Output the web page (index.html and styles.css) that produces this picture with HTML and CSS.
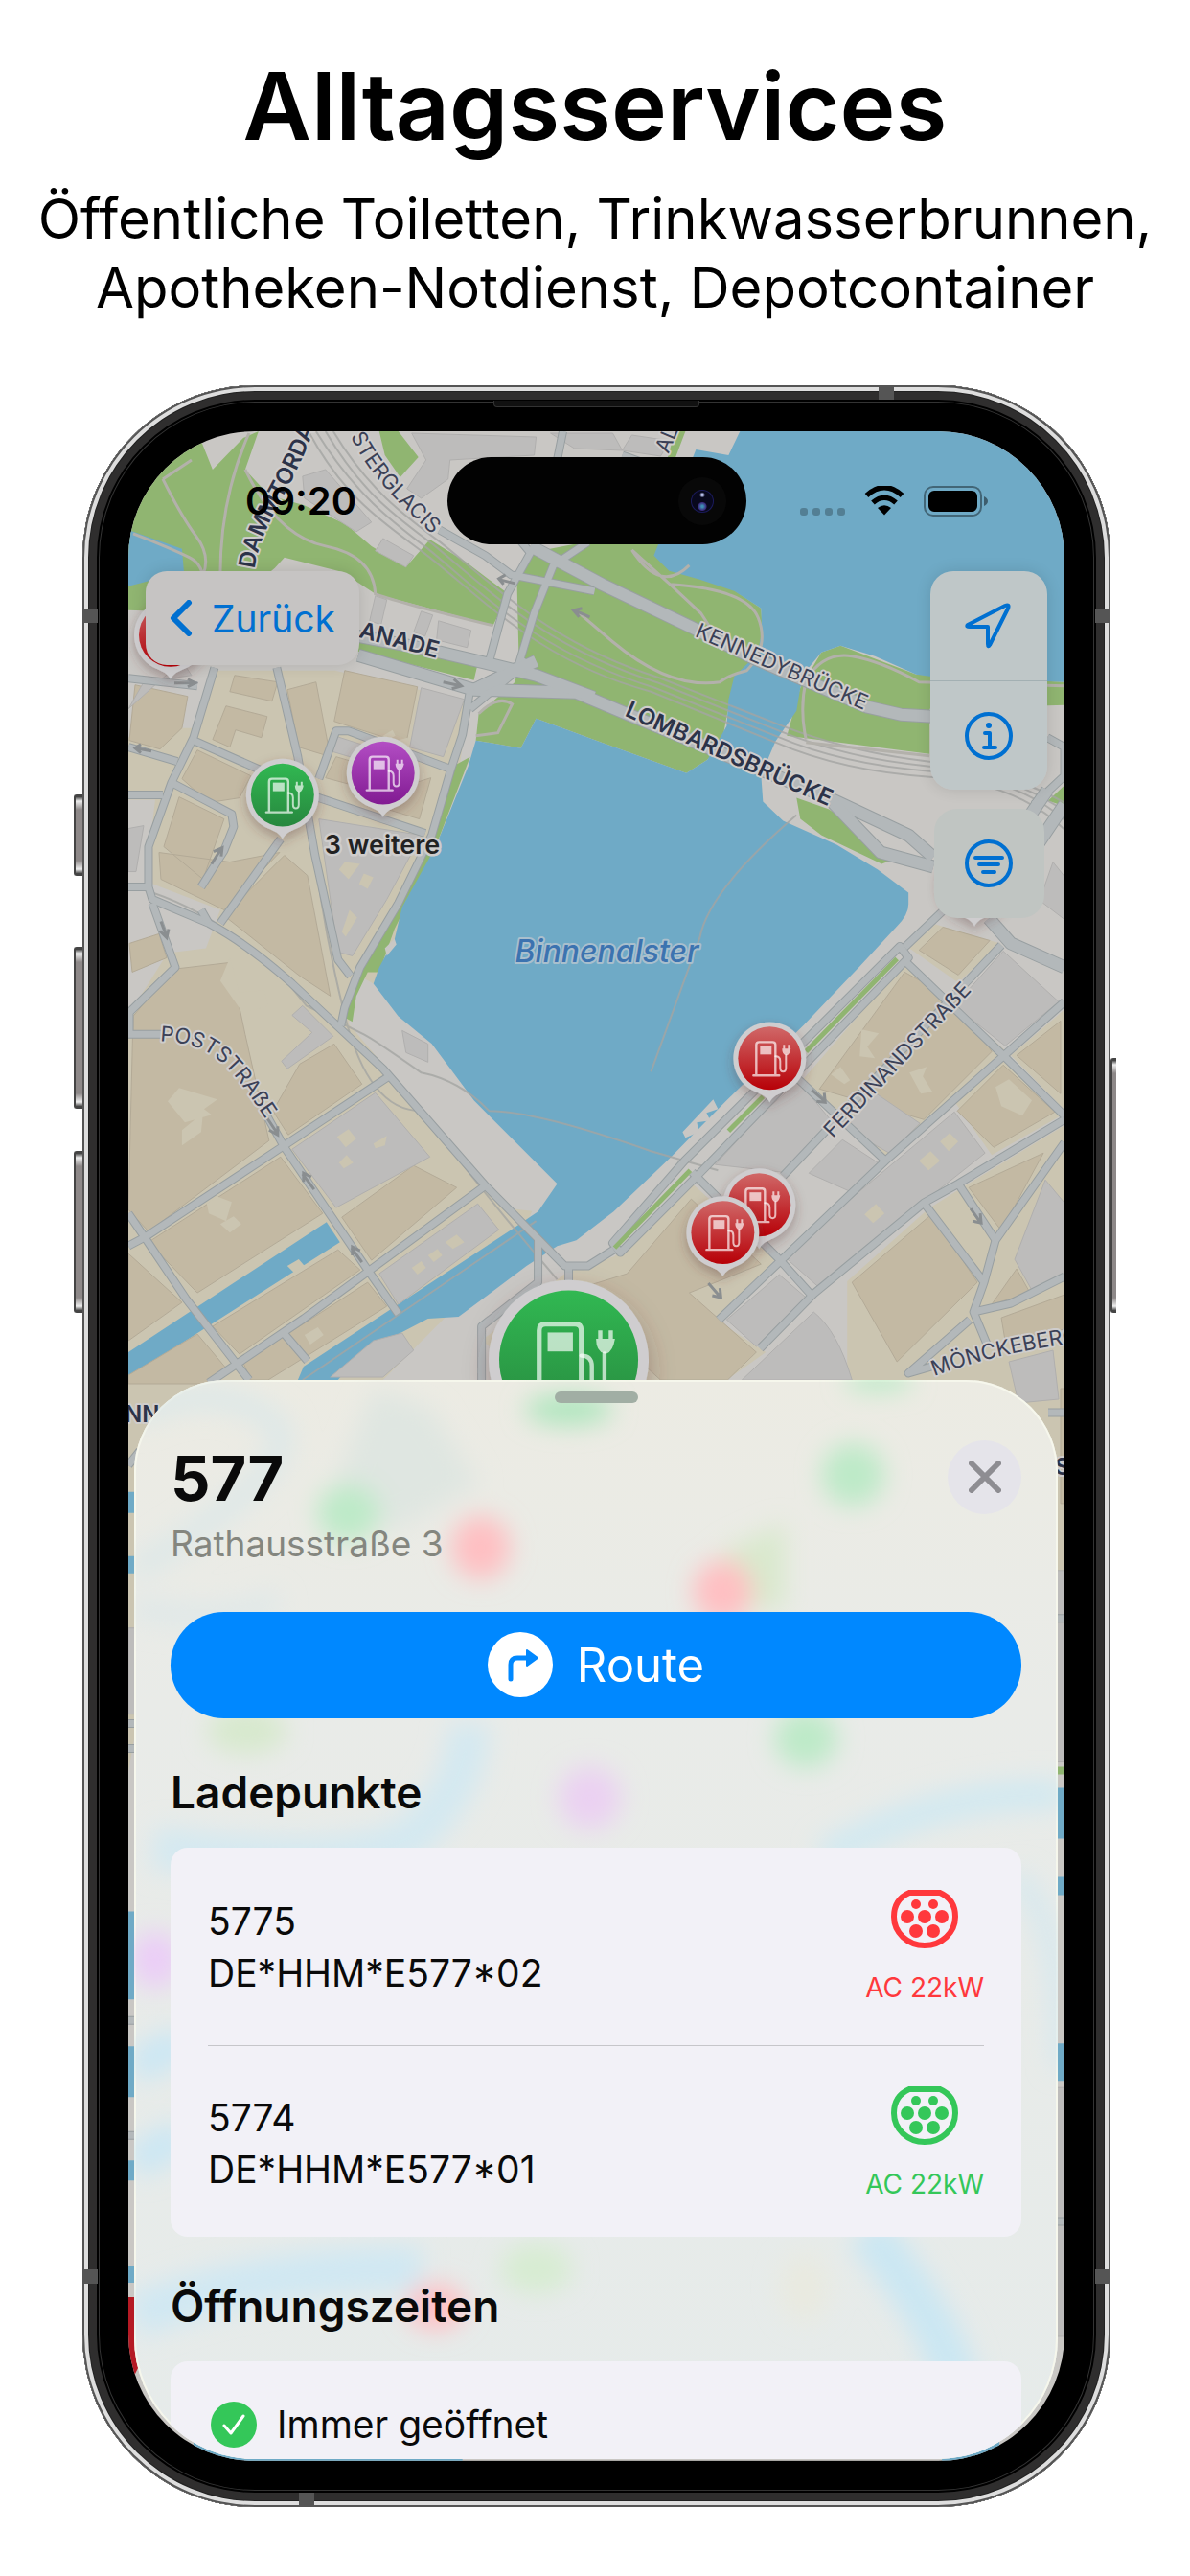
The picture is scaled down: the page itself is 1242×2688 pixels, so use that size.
FILE: index.html
```html
<!DOCTYPE html>
<html lang="de">

<head>
    <meta charset="UTF-8">
    <meta name="viewport" content="width=device-width, initial-scale=1.0">
    <title>Alltagsservices</title>
    <link rel="stylesheet" href="styles.css">
</head>

<body>
    <header class="intro">
        <h1>Alltagsservices</h1>
        <p>Öffentliche Toiletten, Trinkwasserbrunnen, Apotheken-Notdienst, Depotcontainer</p>
    </header>

    <main class="phone">
        <span class="side-key side-key-action"></span>
        <span class="side-key side-key-up"></span>
        <span class="side-key side-key-down"></span>
        <span class="side-key side-key-power"></span>
        <span class="band band-top"></span>
        <span class="band band-bottom"></span>
        <span class="band band-left"></span>
        <span class="band band-right"></span>
        <span class="band band-left band-low"></span>
        <span class="band band-right band-low"></span>
        <span class="speaker"></span>

        <div class="screen">
            <!-- map -->
            <svg class="map" viewBox="134 450 978 2120" preserveAspectRatio="xMidYMin slice" role="img" aria-label="Karte">
                <defs>
                    <linearGradient id="red" x1="0" y1="0" x2="0" y2="1">
                        <stop offset="0" stop-color="#d06868" />
                        <stop offset="1" stop-color="#b70007" />
                    </linearGradient>
                    <linearGradient id="green" x1="0" y1="0" x2="0" y2="1">
                        <stop offset="0" stop-color="#31b852" />
                        <stop offset="1" stop-color="#27873e" />
                    </linearGradient>
                    <linearGradient id="purple" x1="0" y1="0" x2="0" y2="1">
                        <stop offset="0" stop-color="#b34ec4" />
                        <stop offset="1" stop-color="#811a92" />
                    </linearGradient>
                    <filter id="pin-shadow" x="-100%" y="-100%" width="300%" height="300%">
                        <feDropShadow dx="0" dy="5" stdDeviation="6" flood-color="#5a3030" flood-opacity=".35" />
                    </filter>
                    <g id="pin">
                        <path d="M0 46C-3 40-8 38-15 35A38 38 0 1 1 15 35C8 38 3 40 0 46Z" fill="#cfcdcf" filter="url(#pin-shadow)" />
                    </g>
                    <g id="pump" fill="none" stroke="#fff" stroke-opacity=".68" stroke-width="2.4" stroke-linecap="round" stroke-linejoin="round">
                        <path d="M-14 18V-14q0-3 3-3H3q3 0 3 3V18M-17 18H10" />
                        <path d="M-10-13H2V-4H-10Z" fill="#fff" fill-opacity=".68" stroke="none" />
                        <path d="M6-2q5 0 5 5v7q0 4 3 4t3-4V-3" stroke-width="2" />
                        <path d="M13-10H22Q21-4 18-3H17Q13-4 13-10ZM14-14h2v4h-2ZM19-14h2v4h-2Z" fill="#fff" fill-opacity=".68" stroke="none" />
                    </g>
                    <g id="streets">
                        <path d="M224 697L202 770L179 817L155 884V926L159 939L218 964Q258 985 305 1027L400 1116L507 1238L590 1322H614L641 1305" />
                        <path d="M289 697L311 790L329 893L353 1002L366 1019M134 780L185 795M202 773L270 803L333 833L444 870M333 813L351 763H364L471 803M179 817L242 850L244 863L234 888L210 926M293 876L230 964M218 964L210 950M134 926H155M134 830H170M134 708L206 716" />
                        <path d="M159 943L183 1010L135 1057V1080H170M277 1162L297 1198L384 1326L416 1372M134 1301L151 1292L297 1196L406 1124M134 1267L151 1292L194 1356L260 1441M218 1444L317 1377L507 1238M297 1393L321 1421M503 1441V1385L562 1339V1292M594 1322V1345" />
                        <path d="M945 989L985 951M945 1003L1048 1102L1112 1165M1046 987L818 1228M1112 1046L925 1212L751 1378M834 1127L925 1212M723 1224L814 1315L850 1355M1112 1169L1001 1236L965 1256L850 1351L794 1408M965 1256L1028 1339L1017 1370L1032 1406M1001 1236L1040 1295L1112 1193M1040 1295L1028 1339M1017 1370L1056 1361L1112 1333M1013 1378L949 1434L980 1425" />
                        <path d="M640 1298L715 1212L940 988L949 1000L730 1226L648 1308ZM491 720L483 767L471 803L451 872L416 943L376 1010L360 1052L356 1071M491 740L540 700M459 553L507 580L534 600L621 617M511 690L530 620L554 577L540 560M542 693L558 640L578 590L614 566M500 715L550 690M1080 840L1112 810L1112 780L1094 770M588 450L580 490M650 475L720 500" />
                        <path d="M1095 1475H1112M1100 1690h12M1100 2320h12M134 1530L146 1515M134 1800h12M134 1826h12M134 2110h12M134 2230h12" />
                    </g>
                    <g id="avenues">
                        <path d="M374 684L495 720L602 723L652 744L870 835L949 872L975 895" />
                        <path d="M374 664L443 677L507 692L560 705L620 728" />
                        <path d="M554 570L629 610L723 655L787 687L906 738L941 746L975 748" />
                        <path d="M1033 959L1056 985L1112 1010M870 838L920 890L975 905M495 720L560 690M1094 825L1070 860M1085 880L1112 840" />
                    </g>
                    <path id="p-damm" d="M266 594C272 545 305 515 331 440" />
                    <path id="p-glacis" d="M366 455C382 490 410 520 454 560" />
                    <path id="p-esp" d="M374 665L456 687" />
                    <path id="p-kennedy" d="M725 664L915 747" />
                    <path id="p-lomb" d="M652 747Q730 782 884 850" />
                    <path id="p-post" d="M167 1087C225 1090 237 1108 288 1184" />
                    <path id="p-ferd" d="M870 1189L1024 1025" />
                    <path id="p-moenk" d="M976 1437Q1040 1412 1140 1400" />
                    <path id="p-al" d="M698 474L712 440" />
                </defs>

                <rect class="ground" x="134" y="450" width="978" height="2120" />

                <!-- built-up areas -->
                <g class="block">
                    <path d="M134 770L225 700L350 700L490 732L480 800L440 960L378 1055L420 1110L560 1255L540 1300L400 1441L200 1480L134 1850Z" />
                    <path d="M642 1312L719 1232L810 1315L751 1380L800 1412L759 1441L560 1441L503 1400L590 1330Z" />
                    <path d="M945 1005L1056 1102L929 1210L838 1128ZM977 965L1045 985L1001 1026L950 990ZM1056 1102L1112 1054L1112 1159ZM997 1150L1048 1108L1108 1165L1036 1206Z" />
                    <path d="M885 1338L970 1262L1005 1240L1112 1175V1700H1000L885 1441Z" />
                </g>
                <path class="ground" d="M134 640L224 700L205 760L134 760ZM134 835h28L152 920L230 950L215 990L175 995L134 1060ZM376 1019L390 1027L582 1236L560 1265L534 1262L404 1116L364 1069Z" />

                <!-- parks -->
                <g class="park">
                    <path d="M134 450H206L222 490L254 457L270 450L256 490L281 517L317 527L361 547L388 570L424 592L449 563L487 587L531 620L515 653L448 635L392 620L357 597L297 582L287 593L230 640L134 637Z" />
                    <path d="M374 667L499 693L495 710L374 680Z" />
                    <path d="M540 610L554 577L614 565H690L795 635L797 667L761 738L755 770L739 793L717 807L620 772L560 750L544 781L497 773L500 745L538 712L542 690Z" />
                    <path d="M836 718L858 681L878 674L957 704L1112 712V736L971 740V787L822 768Z" />
                    <path d="M832 833L866 845L937 896L921 902L858 872L836 855ZM396 450H416L437 477L418 498L402 475ZM705 450H716L705 479H697ZM1112 820L1095 836L1112 842ZM1100 1845h12v8h-12z" />
                    <path d="M473 800L491 790L455 884L412 970L396 1015H384L372 1040L368 1067L361 1063L366 1031L396 981L440 901Z" />
                </g>

                <!-- water -->
                <g class="water">
                    <path d="M773 450L761 475L727 469L683 580L699 596L731 605L767 617L795 635L796 659L791 683L767 706L761 730L759 758L739 793L717 807L620 772L560 750L544 781L497 773L489 800L455 884L420 947L412 981L396 1010L390 1027L416 1061L451 1090L495 1149L582 1236L562 1265L534 1284L416 1362L317 1427L309 1446L353 1441L376 1414L447 1377L479 1375L550 1322L582 1301L602 1295L641 1265L701 1208L759 1149L840 1070L898 1009L937 967Q949 955 949 944V932L917 908L874 882L818 857L797 837L795 809L810 774L832 742L836 718L844 698L858 681L878 674L914 685L957 704L971 706L1112 712V450Z" />
                    <path d="M134 553L190 573L192 597L134 612ZM134 1412L341 1276L355 1297L134 1438Z" />
                    <path d="M134 1558h8v22h-8zM134 1625h8v18h-8zM134 1996h8v92h-8zM134 2137h8v53h-8zM134 2256h8v21h-8zM134 2367h8v17h-8zM1100 1867h12v53h-12zM1100 1960h12v19h-12zM1100 2134h12v39h-12zM202 2550h281v20H202zM984 2540h60v30H984z" />
                </g>
                <path class="ground" d="M713 1182L745 1148L750 1158L738 1162L742 1170L728 1172L730 1182L716 1188ZM402 990l10-10 2 6-10 12z" />

                <!-- buildings -->
                <g class="building">
                    <path d="M141 715L196 727L190 760L167 782L135 773Z" />
                    <path d="M236 737L279 748L273 770L246 762L240 780L222 772ZM245 705L290 712L284 732L240 722ZM300 720L330 712L345 790L312 780Z" />
                    <path d="M360 700L436 717L424 777L349 753ZM351 790L385 800L377 822L340 812Z" />
                    <path d="M206 783L262 810L250 833L218 838L190 813Z" />
                    <path d="M187 832L234 855L212 918L171 884ZM240 900L292 890L234 950L168 918L166 890Z" />
                    <path d="M297 893L321 914L345 1040L313 1019L234 956ZM400 828L450 812L438 855L395 842Z" />
                    <path d="M135 985L166 975L174 1000L138 1015ZM139 1061L180 1012L240 1005L256 1080L281 1191L155 1286L134 1263Z" />
                    <path d="M313 1111L349 1090L378 1132L301 1185L285 1160Z" />
                    <path d="M357 1271L432 1217L477 1240L388 1316Z" />
                    <path d="M155 1297L293 1208L337 1267L206 1350ZM134 1309L190 1360L134 1400ZM222 1385L353 1305L376 1326L250 1414Z" />
                    <path d="M254 1423L384 1339L404 1364L280 1441H262ZM134 1436L206 1393L238 1431L225 1445H134Z" />
                    <path d="M945 1015L1001 1046L1036 1098L965 1169L856 1137ZM985 968L1034 982L1001 1018L960 992Z" />
                    <path d="M1048 1112L1102 1161L1038 1198L1000 1160ZM1062 1102L1108 1066V1142Z" />
                    <path d="M890 1339L973 1268L1021 1339L937 1422ZM1012 1240L1090 1204L1046 1285ZM1036 1362L1062 1325L1076 1350ZM1046 1376L1112 1352V1388L1050 1400Z" />
                    <path d="M655 1330L722 1252L795 1320L720 1350L790 1412L760 1441H690L590 1350ZM1108 1450h8v120h-8z" />
                </g>
                <g class="building grey">
                    <path d="M440 718L485 730L463 790L428 780ZM333 855L440 872L404 939L368 998L353 994ZM349 768L380 778L372 792L345 784Z" />
                    <path d="M305 1200L392 1141L449 1208L351 1261ZM396 1330L499 1257L521 1284L416 1362ZM316 1050L348 1082L300 1116L294 1108L326 1078L305 1060Z" />
                    <path d="M420 1076L447 1090V1109L424 1099ZM390 1400L420 1392L432 1410L400 1438H345Z" />
                    <path d="M1048 993L1106 1046L1050 1092L997 1050ZM834 1129L874 1177L818 1224L747 1216L798 1161Z" />
                    <path d="M882 1177L914 1141L961 1173L929 1204ZM880 1190L917 1214L890 1245L845 1225ZM997 1161L1029 1204L854 1343L818 1311Z" />
                    <path d="M759 1378L814 1331L842 1355L790 1406ZM775 1441L850 1370Q875 1390 890 1441Z" />
                    <path d="M1092 1232L1112 1256V1330L1080 1351L1060 1315ZM1054 1422L1100 1410L1106 1461L1064 1465Z" />
                    <path d="M134 865L150 862L142 910H134ZM316 497L340 490L388 545L372 555L318 520ZM392 575L400 562L432 580L424 592Z" />
                    <path d="M430 452L560 456L558 475L470 480L468 500L440 520L425 510L445 480ZM575 452L640 452L650 470L600 468ZM660 454L700 460L690 476L650 470ZM392 622L404 626L398 652L386 648ZM440 638L452 642L444 664L432 660ZM458 648L492 658L488 676L456 668Z" />
                    <path d="M134 740L190 690L200 705L150 712ZM1100 900L1112 915V960L1086 940Z" />
                    <path d="M1100 1640h12v200h-12zM1100 2180h12v260h-12zM134 1700h8v90h-8z" />
                </g>
                <g class="block">
                    <path d="M352 1187l12-8 8 10-11 9zM354 1214l8-8 7 8-10 6zM390 1194l14-8-2 10-10 3zM360 900l16 2-12 16-10-10zM380 912l10 4-6 12-9-5zM365 950l8 8-12 20-4-5zM430 1324l10-7 5 7-9 7zM447 1311l10-7 5 7-9 7zM465 1297l12-8 8 8-12 7z" />
                    <path d="M175 1150l12-14 40 12-14 10 8 6-28 8zM190 1180l22-18-2 20-20 14zM216 1257l10-8 16 6-6 20-18-8zM230 1278l14-8 8 8-12 9zM300 1322l12-7 6 7-11 7zM318 1394l14-8 6 8-14 10zM240 1000l10 36 26-2 4 16-26 8-24-34z" />
                    <path d="M868 1122l10-8 10 14-6 4zM900 1075l18 4-12 14 8 12-16-2zM950 1120l18-6-4 10 10 16-12 2zM1040 1135l14-8 24 22-10 16-22-10zM960 1212l12-10 10 10-12 10zM982 1192l10-9 9 9-10 10zM903 1268l12-11 9 10-12 10z" />
                    <path d="M400 768l10-6 3 6-8 5zM403 788l10-2 2 6-10 3zM418 772l8-2 1 8-8 1z" />
                </g>

                <!-- railway -->
                <g class="rail">
                    <path d="M322 450C360 520 400 545 440 575C500 620 560 690 680 722L810 775Q880 805 971 811T1112 866" />
                    <path d="M330 450C370 515 410 545 446 572C505 620 560 680 684 718L812 769Q880 798 971 805T1112 856" />
                    <path d="M340 450C378 515 415 540 452 568C510 616 570 676 688 713L814 763Q885 792 971 800T1112 847" />
                    <path d="M348 450C384 510 422 538 460 566C520 614 575 672 690 708L815 757Q890 786 971 795T1112 838" />
                    <path d="M134 925C200 940 270 985 320 1050Q370 1075 380 1080T440 1120Q480 1128 511 1160Q560 1160 680 1202L750 1222M832 851Q740 930 731 979Q720 1010 680 1119M325 860Q335 960 360 1060T440 1160Q500 1240 582 1336M316 1441L560 1275" />
                </g>

                <!-- paths -->
                <g class="trail">
                    <path d="M139 557Q180 573 198 582T212 620M170 500Q190 540 205 560T212 600M260 452Q230 520 230 600M256 490Q290 560 340 570T392 620Q420 630 515 653M170 500L200 480M660 574L700 610L732 640L745 660M700 610Q780 615 792 645T780 700Q760 705 752 712Q700 720 640 670L605 640M660 574Q690 620 720 590M842 772Q835 740 842 710Q860 680 890 685T960 712L1112 716M842 775L971 789M500 745Q520 725 535 735L520 765L497 768" />
                </g>

                <!-- streets, casing first and surface on top -->
                <use href="#streets" class="street-casing" />
                <use href="#avenues" class="avenue-casing" />
                <use href="#streets" class="street" />
                <use href="#avenues" class="avenue" />
                <path class="verge" d="M937 1001L842 1098M797 1145L761 1181M721 1222L642 1303" />

                <!-- one-way arrows -->
                <path class="arrow" d="M182 713h20M196 709l8 4-8 4M158 784l-16-3M147 777l-6 4 6 5M221 902l10-16M223 889l9-4-1 9M168 962l6 16M167 972l7 7 2-9M278 1166l12 18M281 1180l9 5v-9M328 1242l-12-16M317 1234v-9l8 4M378 1318l-11-15M368 1311v-9l8 4M848 1138l14 12M861 1141l1 10-9-1M1014 1262l10 14M1024 1267l1 10-9-2M740 1340l12 14M752 1345l1 10-9-2M463 712l18 4M474 709l8 7-10 3M538 609l-16-4M528 600l-7 4 5 6M616 644l-16-7M608 635l-9 2 6 7" />

                <g class="label">
                    <text class="strong"><textPath href="#p-damm">DAMMTORDAMM</textPath></text>
                    <text><textPath href="#p-glacis">STERGLACIS</textPath></text>
                    <text class="strong"><textPath href="#p-esp">ANADE</textPath></text>
                    <text><textPath href="#p-al">AL</textPath></text>
                    <text><textPath href="#p-kennedy">KENNEDYBRÜCKE</textPath></text>
                    <text class="strong"><textPath href="#p-lomb">LOMBARDSBRÜCKE</textPath></text>
                    <text><textPath href="#p-post">POSTSTRAẞE</textPath></text>
                    <text><textPath href="#p-ferd">FERDINANDSTRAẞE</textPath></text>
                    <text><textPath href="#p-moenk">MÖNCKEBERG</textPath></text>
                    <text class="strong" x="130" y="1485">NN</text>
                    <text class="strong" x="1102" y="1540">S</text>
                    <text class="lake" x="538" y="1005">Binnenalster</text>
                </g>

                <!-- charging stations -->
                <g transform="translate(178 663)"><use href="#pin" /><circle r="33" fill="url(#red)" /></g>
                <g transform="translate(1018 921)"><use href="#pin" /></g>
                <g transform="translate(400 807)"><use href="#pin" /><circle r="33" fill="url(#purple)" /><use href="#pump" /></g>
                <g transform="translate(295 830)"><use href="#pin" /><circle r="33" fill="url(#green)" /><use href="#pump" /></g>
                <g transform="translate(804 1105)"><use href="#pin" /><circle r="33" fill="url(#red)" /><use href="#pump" /></g>
                <g transform="translate(793 1258)"><use href="#pin" /><circle r="33" fill="url(#red)" /><use href="#pump" /></g>
                <g transform="translate(755 1287)"><use href="#pin" /><circle r="33" fill="url(#red)" /><use href="#pump" /></g>
                <g transform="translate(594 1420) scale(2.2)"><use href="#pin" /><circle r="33" fill="url(#green)" /><use href="#pump" /></g>
                <path d="M134 2399h12v70l-6 12h-6z" fill="#b51a24" />
                <text class="more" x="339" y="891">3 weitere</text>
            </svg>

            <div class="top">
                <div class="status-bar">
                    <time class="clock">09:20</time>
                    <div class="island"><span class="camera"></span></div>
                    <div class="indicators">
                        <span class="cell-dots"><i></i><i></i><i></i><i></i></span>
                        <svg class="wifi" viewBox="0 0 42 31" aria-hidden="true">
                            <path d="M2.500 10Q21-6.500 39.500 10M9 17.500Q21 7 33 17.500" fill="none" stroke="#000" stroke-width="5.500" />
                            <path d="M14 23Q21 17.500 28 23L21 30.500Z" />
                        </svg>
                        <svg class="battery" viewBox="0 0 67 32" aria-hidden="true">
                            <rect x="1" y="1" width="59" height="30" rx="9" fill="none" stroke="#000" stroke-opacity=".4" stroke-width="2" />
                            <rect x="5" y="5" width="51" height="22" rx="6" />
                            <path d="M63 11q4 2 4 5t-4 5z" fill-opacity=".45" />
                        </svg>
                    </div>
                </div>

                <div class="toolbar">
                    <button class="map-button back" type="button">
                        <svg viewBox="0 0 24 38" aria-hidden="true">
                            <path d="M20 3L4 19L20 35" />
                        </svg>
                        Zurück
                    </button>
                    <div class="tools">
                        <div class="tool-group">
                            <button class="tool" type="button" aria-label="Mein Standort">
                                <svg viewBox="0 0 50 50" aria-hidden="true">
                                    <path d="M3 24L42 4Q47 2 45 7L26 45Q24 48 24 44V26H5Q1 26 3 24Z" />
                                </svg>
                            </button>
                            <button class="tool" type="button" aria-label="Information">
                                <svg viewBox="0 0 50 50" aria-hidden="true">
                                    <circle cx="25" cy="25" r="23" />
                                    <path d="M21 22h5v15M20 37h12" />
                                    <circle class="dot" cx="25" cy="14" r="3" />
                                </svg>
                            </button>
                        </div>
                        <button class="tool tool-filter" type="button" aria-label="Filter">
                            <svg viewBox="0 0 50 50" aria-hidden="true">
                                <circle cx="25" cy="25" r="23" />
                                <path d="M11 19h28M15 26h20M19 34h12" />
                            </svg>
                        </button>
                    </div>
                </div>
            </div>

            <section class="sheet">
                <!-- frosted map behind the sheet -->
                <svg class="frost" viewBox="140 1441 965 1128" preserveAspectRatio="none" aria-hidden="true">
                    <defs>
                        <filter id="soft" x="-60%" y="-60%" width="220%" height="220%">
                            <feGaussianBlur stdDeviation="13" />
                        </filter>
                    </defs>
                    <g filter="url(#soft)">
                        <path d="M140 1480Q220 1440 280 1480T140 1640" fill="none" stroke="#dde8e8" stroke-width="24" />
                        <path d="M390 1450L450 1470L500 1550L410 1600L350 1550Z" fill="#dfe6e1" />
                        <ellipse cx="364" cy="1580" rx="33" ry="30" fill="#bdeac8" />
                        <ellipse cx="594" cy="1472" rx="46" ry="16" fill="#aee6bd" />
                        <ellipse cx="502" cy="1616" rx="31" ry="33" fill="#ffbfc2" />
                        <ellipse cx="891" cy="1540" rx="33" ry="33" fill="#bdeac8" />
                        <ellipse cx="918" cy="1443" rx="36" ry="8" fill="#aeeabf" />
                        <path d="M820 1590V1680H770L755 1620Z" fill="#d9e9cd" />
                        <ellipse cx="755" cy="1662" rx="31" ry="33" fill="#ffbfc2" />
                        <ellipse cx="842" cy="1816" rx="33" ry="30" fill="#bdeac8" />
                        <ellipse cx="258" cy="1808" rx="42" ry="24" fill="#d7e9cd" />
                        <path d="M140 1680Q240 1700 290 1670" fill="none" stroke="#dfe8e8" stroke-width="24" />
                        <path d="M490 1800Q490 1860 440 1910T160 1930" fill="none" stroke="#d4e9f1" stroke-width="44" />
                        <ellipse cx="616" cy="1878" rx="33" ry="33" fill="#ebd1f2" />
                        <ellipse cx="162" cy="2047" rx="26" ry="30" fill="#ebcdf7" />
                        <path d="M860 1940Q980 1870 1110 1875" fill="none" stroke="#d2e9f1" stroke-width="32" />
                        <path d="M1060 1960Q1110 2000 1110 2160" fill="none" stroke="#d5e8ef" stroke-width="20" />
                        <path d="M140 2160Q180 2140 190 2130M140 2260L190 2230" stroke="#cbe7f4" stroke-width="36" fill="none" />
                        <path d="M140 2420Q260 2370 440 2370" fill="none" stroke="#d0e8f3" stroke-width="46" />
                        <ellipse cx="455" cy="2410" rx="31" ry="24" fill="#ffbfc4" />
                        <ellipse cx="560" cy="2370" rx="38" ry="26" fill="#d7ecd2" />
                        <path d="M905 2330Q980 2420 1000 2490" fill="none" stroke="#cbe7f3" stroke-width="46" />
                        <ellipse cx="840" cy="2390" rx="26" ry="36" fill="#e9eae0" />
                    </g>
                </svg>

                <span class="grabber"></span>
                <div class="place">
                    <div class="place-name">
                        <h2>577</h2>
                        <p>Rathausstraße 3</p>
                    </div>
                    <button class="close" type="button" aria-label="Schließen">
                        <svg viewBox="0 0 34 34" aria-hidden="true">
                            <path d="M3 3L31 31M31 3L3 31" />
                        </svg>
                    </button>
                </div>

                <button class="route" type="button">
                    <svg viewBox="0 0 68 68" aria-hidden="true">
                        <circle cx="34" cy="34" r="34" fill="#fff" />
                        <path d="M24 49V34Q24 27 31 27H42" fill="none" stroke="#08f" stroke-width="5" stroke-linecap="round" />
                        <path d="M41 19L52 27L41 35Z" fill="#08f" stroke="#08f" stroke-width="2" stroke-linejoin="round" />
                    </svg>
                    Route
                </button>

                <h3>Ladepunkte</h3>
                <ul class="card">
                    <li class="point">
                        <p>5775<br>DE*HHM*E577*02</p>
                        <div class="plug busy">
                            <svg viewBox="0 0 70 61" aria-hidden="true">
                                <path d="M19 3H51Q67 10 67 28A32 30 0 0 1 3 28Q3 10 19 3Z" />
                                <g>
                                    <circle cx="26" cy="15" r="5" /><circle cx="44" cy="15" r="5" />
                                    <circle cx="17" cy="28" r="7" /><circle cx="35" cy="28" r="7" /><circle cx="53" cy="28" r="7" />
                                    <circle cx="26" cy="43" r="7" /><circle cx="44" cy="43" r="7" />
                                </g>
                            </svg>
                            <span>AC 22kW</span>
                        </div>
                    </li>
                    <li class="point">
                        <p>5774<br>DE*HHM*E577*01</p>
                        <div class="plug free">
                            <svg viewBox="0 0 70 61" aria-hidden="true">
                                <path d="M19 3H51Q67 10 67 28A32 30 0 0 1 3 28Q3 10 19 3Z" />
                                <g>
                                    <circle cx="26" cy="15" r="5" /><circle cx="44" cy="15" r="5" />
                                    <circle cx="17" cy="28" r="7" /><circle cx="35" cy="28" r="7" /><circle cx="53" cy="28" r="7" />
                                    <circle cx="26" cy="43" r="7" /><circle cx="44" cy="43" r="7" />
                                </g>
                            </svg>
                            <span>AC 22kW</span>
                        </div>
                    </li>
                </ul>

                <h3>Öffnungszeiten</h3>
                <div class="card hours">
                    <svg viewBox="0 0 48 48" aria-hidden="true">
                        <circle cx="24" cy="24" r="24" fill="#34c759" />
                        <path d="M14 25L21 33L34 15" fill="none" stroke="#fff" stroke-width="3" stroke-linecap="round" stroke-linejoin="round" />
                    </svg>
                    Immer geöffnet
                </div>
            </section>
        </div>
    </main>
</body>

</html>
```

FILE: styles.css
```css
:root {
    --link-color: #0070d1;
    --accent-color: #0088ff;
    --text-color: #0a0a0a;
    --subtext-color: #84867f;
    --card-color: #f2f1f7;
    --line-color: #c6c6ca;
    --busy-color: #ff383c;
    --free-color: #34c759;
}

* {
    margin: 0;
    padding: 0;
    box-sizing: border-box;
}

body {
    font-family: Inter, "Liberation Sans", sans-serif;
    background-color: #fff;
    color: #000;
    padding-bottom: 68px;
}

button {
    font: inherit;
    border: none;
    cursor: pointer;
}

.intro {
    padding: 51px 20px 66px;
    text-align: center;
}

.intro h1 {
    font-size: 98px;
    line-height: 120px;
    font-weight: 600;
}

.intro p {
    margin-top: 21px;
    font-size: 58px;
    line-height: 72px;
}

/* phone body */

.phone {
    position: relative;
    margin: 0 83px 0 86px;
    padding: 48px;
    border-radius: 180px;
    background-color: #000;
    box-shadow: inset 0 0 0 2px #555, inset 0 0 0 6px #dedede, inset 0 0 0 7px #222, inset 0 0 0 15px #2f2e2e, inset 0 0 0 17px #000, inset 0 0 0 18px #333;
}

.side-key {
    position: absolute;
    left: -9px;
    width: 9px;
    border: 2px solid #444;
    border-right: none;
    border-radius: 3px 0 0 3px;
    background: linear-gradient(#333, #eee 5px, #8d8888 14px, #8d8888 calc(100% - 14px), #eee calc(100% - 5px), #333);
}

.side-key-action {
    top: 427px;
    height: 85px;
}

.side-key-up {
    top: 586px;
    height: 169px;
}

.side-key-down {
    top: 799px;
    height: 169px;
}

.side-key-power {
    top: 702px;
    left: auto;
    right: -6px;
    width: 6px;
    height: 266px;
}

.band {
    position: absolute;
    width: 16px;
    height: 15px;
    background-color: #555;
}

.band-top {
    top: 0;
    right: 226px;
}

.band-bottom {
    bottom: 0;
    left: 226px;
}

.band-left {
    top: 233px;
    left: 0;
}

.band-right {
    top: 233px;
    right: 0;
}

.band-low {
    top: auto;
    bottom: 233px;
}

.speaker {
    position: absolute;
    top: 16px;
    left: 40%;
    width: 20%;
    height: 7px;
    border: 1px solid #333;
    border-top: none;
    border-radius: 0 0 4px 4px;
    background-color: #111;
}

.screen {
    position: relative;
    display: grid;
    grid-template-rows: minmax(0, 991fr) minmax(0, 1129fr);
    aspect-ratio: 978 / 2120;
    border-radius: 132px;
    overflow: hidden;
}

/* map */

.map {
    position: absolute;
    inset: 0;
    width: 100%;
    height: 100%;
}

.ground {
    fill: #c9c7c4;
}

.block {
    fill: #cbc5b1;
}

.park {
    fill: #90b571;
}

.water {
    fill: #6faac6;
}

.building {
    fill: #c3b9a3;
    stroke: #b3aa97;
    stroke-width: 1;
}

.building.grey {
    fill: #bdbcbb;
    stroke: #b0afae;
}

.rail {
    fill: none;
    stroke: #a4a5a3;
    stroke-width: 2;
    opacity: .8;
}

.trail {
    fill: none;
    stroke: #b3b1ab;
    stroke-width: 3;
}

.street-casing,
.street,
.avenue-casing,
.avenue {
    fill: none;
    stroke-linejoin: round;
}

.street-casing {
    stroke: #989fa1;
    stroke-width: 9;
}

.street {
    stroke: #b3b8ba;
    stroke-width: 7;
}

.avenue-casing {
    stroke: #989fa1;
    stroke-width: 14;
}

.avenue {
    stroke: #b3b8ba;
    stroke-width: 12;
}

.verge {
    fill: none;
    stroke: #90b571;
    stroke-width: 5;
}

.arrow {
    fill: none;
    stroke: #8a8e90;
    stroke-width: 3;
}

.label {
    font-size: 22px;
    fill: #3b4157;
    stroke: #cfcdcc;
    stroke-width: 4;
    stroke-linejoin: round;
    paint-order: stroke;
}

.label .strong {
    font-size: 24px;
    font-weight: 600;
    fill: #2c3349;
}

.label .lake {
    font-size: 32px;
    font-weight: 500;
    font-style: italic;
    fill: #3c73b0;
    stroke: #a9bfcd;
}

.more {
    font-size: 27px;
    font-weight: 600;
    fill: #222;
    stroke: #cfcdcc;
    stroke-width: 5;
    stroke-linejoin: round;
    paint-order: stroke;
}

/* status bar and map controls */

.top {
    position: relative;
    padding: 27px 18px 0;
}

.status-bar {
    display: grid;
    grid-template-columns: 1fr 312px 1fr;
    align-items: center;
    height: 91px;
}

.clock {
    padding-left: 104px;
    font-size: 40px;
    line-height: 48px;
    font-weight: 600;
}

.island {
    display: flex;
    align-items: center;
    justify-content: flex-end;
    height: 91px;
    padding-right: 35px;
    border-radius: 46px;
    background-color: #020202;
}

.camera {
    width: 22px;
    height: 22px;
    border-radius: 50%;
    background: radial-gradient(circle at 50% 20%, #b9c2ee 0 1px, transparent 3px), radial-gradient(circle at 50% 75%, #3f8fb4 0 1px, #3a2a7c 4px, transparent 5px), #08081c;
    box-shadow: 0 0 0 1px #1b1b5e, 0 0 0 14px #080808;
}

.indicators {
    display: flex;
    align-items: center;
    gap: 20px;
    padding-left: 56px;
}

.cell-dots {
    display: flex;
    gap: 5px;
    padding-top: 22px;
}

.cell-dots i {
    width: 8px;
    height: 8px;
    border-radius: 3px;
    background-color: rgba(0, 0, 0, .25);
}

.wifi {
    width: 42px;
    height: 31px;
}

.battery {
    width: 67px;
    height: 32px;
}

.toolbar {
    display: flex;
    align-items: flex-start;
    justify-content: space-between;
    margin-top: 28px;
}

.map-button {
    display: flex;
    align-items: center;
    gap: 20px;
    height: 98px;
    padding: 0 25px;
    border-radius: 22px;
    background-color: #c6c4c3;
    box-shadow: 0 0 16px rgba(0, 0, 0, .12);
    color: var(--link-color);
    font-size: 39px;
}

.map-button svg {
    width: 24px;
    height: 38px;
    fill: none;
    stroke: currentColor;
    stroke-width: 6;
    stroke-linecap: round;
    stroke-linejoin: round;
}

.tools {
    display: flex;
    flex-direction: column;
    align-items: center;
    gap: 20px;
}

.tool-group {
    border-radius: 24px;
    overflow: hidden;
    box-shadow: 0 0 16px rgba(0, 0, 0, .12);
}

.tool {
    display: flex;
    align-items: center;
    justify-content: center;
    width: 122px;
    height: 114px;
    background-color: #bfc7c8;
    color: var(--link-color);
}

.tool + .tool {
    border-top: 1px solid #a3b0b3;
}

.tool-filter {
    width: 115px;
    border-radius: 24px;
    background-color: #c0c5c2;
}

.tool svg {
    width: 50px;
    height: 50px;
    fill: none;
    stroke: currentColor;
    stroke-width: 4;
    stroke-linecap: round;
    stroke-linejoin: round;
}

.tool .dot {
    fill: currentColor;
    stroke: none;
}

/* detail sheet */

.sheet {
    position: relative;
    display: flex;
    flex-direction: column;
    margin: 0 7px 2px 6px;
    padding: 0 38px;
    border-radius: 96px 96px 126px 126px;
    background: linear-gradient(#ecebe3, #e9ebe8 30%, #e6ebea);
    box-shadow: inset 0 0 0 2px #f6f7ec;
    color: var(--text-color);
    overflow: hidden;
}

.sheet > * {
    position: relative;
    flex-shrink: 0;
}

.sheet > .frost {
    position: absolute;
    inset: 0;
    width: 100%;
    height: 100%;
}

.grabber {
    align-self: center;
    width: 87px;
    height: 12px;
    margin-top: 12px;
    border-radius: 6px;
    background-color: #a1aea4;
}

.place {
    display: flex;
    justify-content: space-between;
    align-items: flex-start;
    margin-top: 39px;
}

.place h2 {
    font-size: 65px;
    line-height: 80px;
    font-weight: 700;
}

.place p {
    margin-top: 6px;
    font-size: 37px;
    line-height: 44px;
    color: var(--subtext-color);
}

.close {
    display: flex;
    align-items: center;
    justify-content: center;
    width: 77px;
    height: 77px;
    border-radius: 50%;
    background-color: #e5e4ea;
    color: #8e8d92;
}

.close svg {
    width: 34px;
    height: 34px;
    fill: none;
    stroke: currentColor;
    stroke-width: 6;
    stroke-linecap: round;
}

.route {
    display: flex;
    align-items: center;
    justify-content: center;
    gap: 25px;
    height: 111px;
    margin: 49px 0 5px;
    border-radius: 56px;
    background-color: var(--accent-color);
    color: #fff;
    font-size: 49px;
}

.route svg {
    width: 68px;
    height: 68px;
}

.sheet h3 {
    margin: 44px 0 30px;
    font-size: 46px;
    line-height: 56px;
    font-weight: 600;
}

.card {
    padding: 2px 39px 0;
    border-radius: 18px;
    background-color: var(--card-color);
    font-size: 39px;
    line-height: 54px;
    list-style: none;
}

.point {
    display: flex;
    justify-content: space-between;
    align-items: center;
    padding: 42px 0;
}

.point + .point {
    padding-bottom: 37px;
    border-top: 1px solid var(--line-color);
}

.plug {
    display: flex;
    flex-direction: column;
    align-items: center;
    gap: 23px;
    font-size: 28px;
    line-height: 36px;
}

.plug svg {
    width: 70px;
    height: 61px;
    fill: none;
    stroke: currentColor;
    stroke-width: 6;
}

.plug g {
    fill: currentColor;
    stroke: none;
}

.plug.busy {
    color: var(--busy-color);
}

.plug.free {
    color: var(--free-color);
}

.hours {
    display: flex;
    align-items: center;
    gap: 21px;
    padding: 39px 42px 80px;
}

.hours svg {
    width: 48px;
    height: 48px;
}
```
